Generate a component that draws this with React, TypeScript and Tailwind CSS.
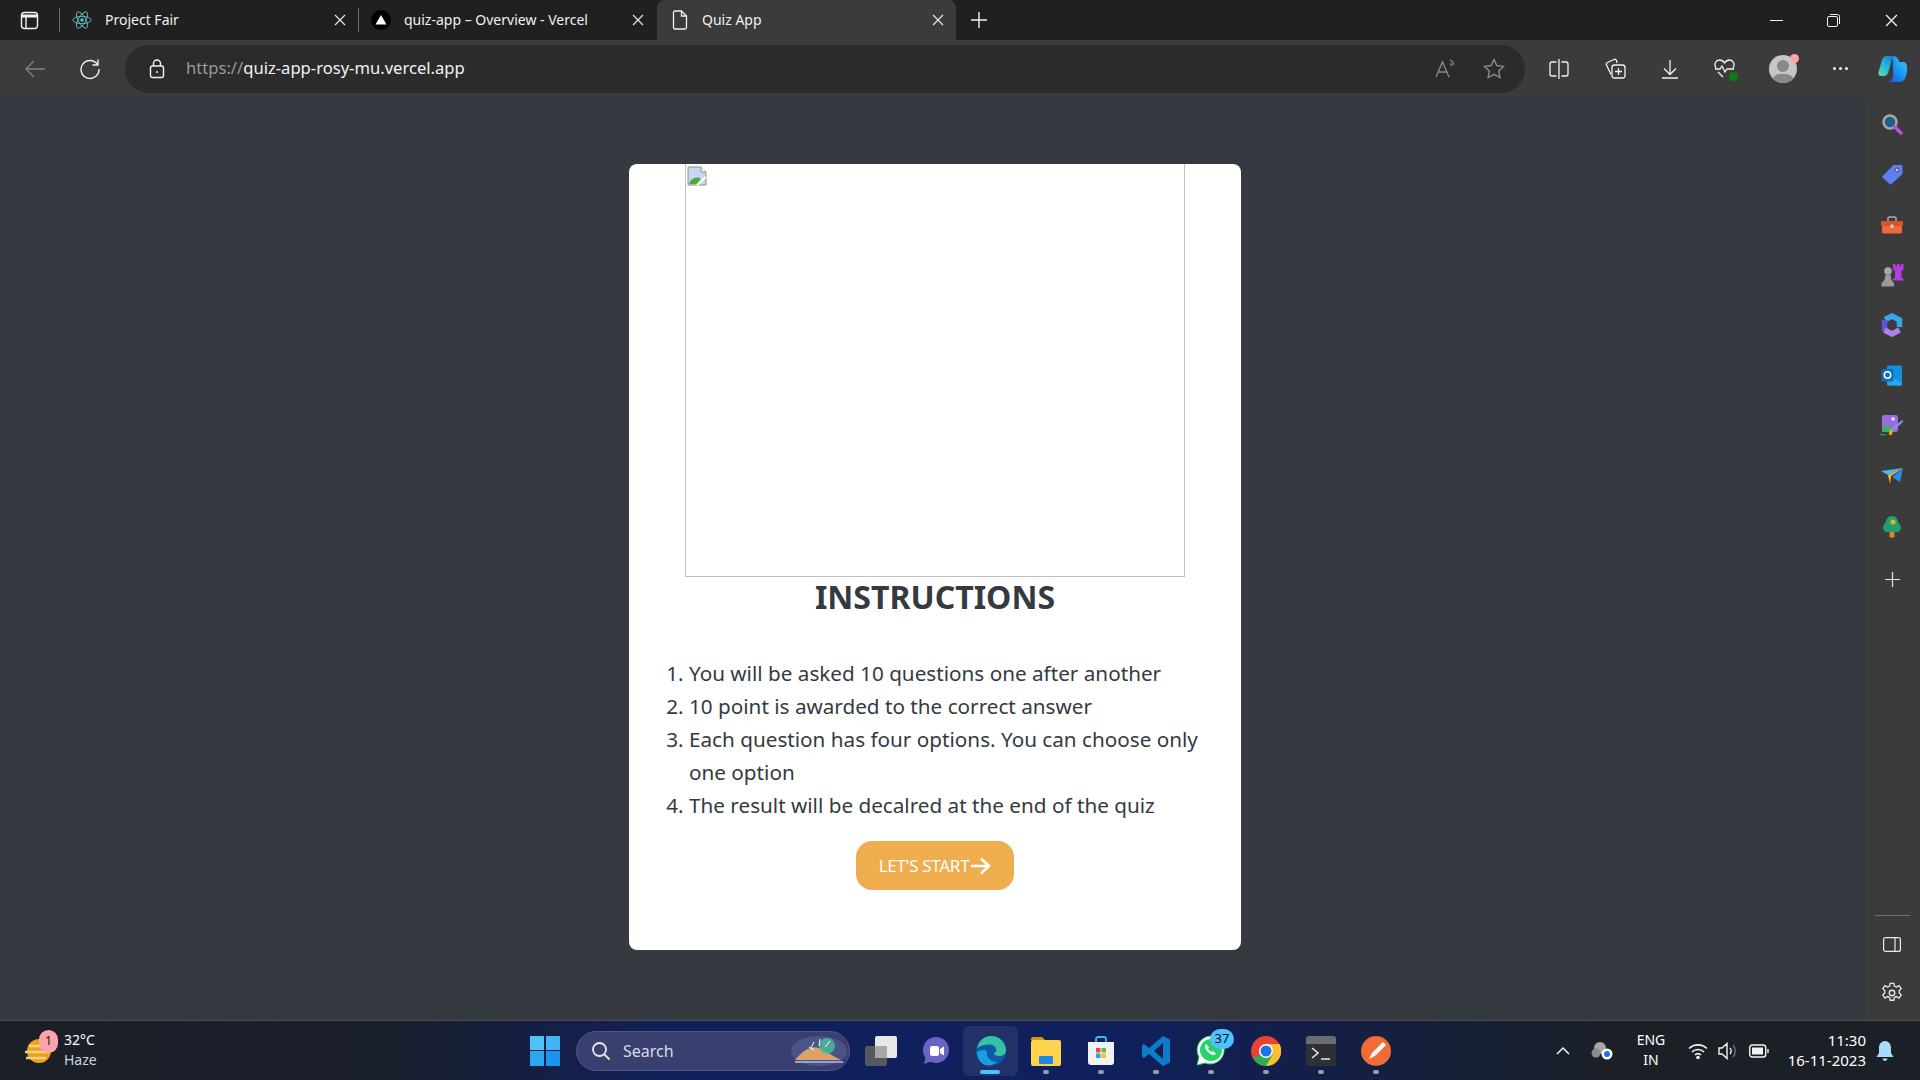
import { ReactNode } from 'react';

const ui = "font-['Noto_Sans','Open_Sans',sans-serif]";

function CloseGlyph({ className = 'text-gray-200', size = 12 }: { className?: string; size?: number }) {
    return (
        <svg width={size} height={size} viewBox="0 0 12 12" className={className} fill="none" stroke="currentColor" strokeWidth="1.2">
            <path d="M1 1l10 10M11 1L1 11" />
        </svg>
    );
}

function ReactLogo() {
    return (
        <svg width="20" height="20" viewBox="-12 -12 24 24" fill="none" stroke="#6fc3d8" strokeWidth="1">
            <circle r="2" fill="#6fc3d8" stroke="none" />
            <ellipse rx="11" ry="4.4" />
            <ellipse rx="11" ry="4.4" transform="rotate(60)" />
            <ellipse rx="11" ry="4.4" transform="rotate(120)" />
        </svg>
    );
}

function Tab({ icon, title, active, width }: { icon: ReactNode; title: string; active?: boolean; width: string }) {
    return (
        <div className={`flex items-center h-full shrink-0 pr-[12px] ${width} ${active ? 'pl-[13px] bg-[#3b3b3b] rounded-t-lg' : 'pl-[12px]'}`}>
            <div className="w-[20px] flex justify-center">{icon}</div>
            <span className={`-mt-[2px] flex-1 text-[14px] text-[#f0f0f0] whitespace-nowrap ${active ? 'ml-[12px]' : 'ml-[13px]'}`}>{title}</span>
            <CloseGlyph />
        </div>
    );
}

function TabStrip() {
    return (
        <div className="h-[40px] bg-[#202020] flex items-end">
            <div className="w-[59px] h-[40px] flex items-center justify-center shrink-0">
                <svg width="19" height="19" viewBox="0 0 19 19" fill="none" stroke="#f2f2f2" strokeWidth="1.4">
                    <rect x="1.5" y="1.5" width="16" height="16" rx="3" />
                    <path d="M1.5 5h16" strokeWidth="3" />
                    <path d="M6 6v11" />
                </svg>
            </div>
            <div className="w-px h-[24px] bg-[#6b6b6b] mb-[8px]" />
            <Tab width="w-[298px]" title="Project Fair" icon={<ReactLogo />} />
            <div className="w-px h-[24px] bg-[#6b6b6b] mb-[8px]" />
            <Tab
                width="w-[297px]"
                title="quiz-app – Overview - Vercel"
                icon={
                    <svg width="20" height="20" viewBox="0 0 20 20">
                        <circle cx="10" cy="10" r="10" fill="#000" />
                        <path d="M10 5l5.5 9.5h-11z" fill="#fff" />
                    </svg>
                }
            />
            <Tab
                active
                width="w-[299px] ml-px"
                title="Quiz App"
                icon={
                    <svg width="16" height="20" viewBox="0 0 16 20" fill="none" stroke="#f2f2f2" strokeWidth="1.3">
                        <path d="M2.5 1h7l5 5v11.5a1.5 1.5 0 0 1-1.500 1.500h-10.500a1.500 1.500 0 0 1-1-1.500v-15a1.500 1.500 0 0 1 1-1.500z" />
                        <path d="M9.500 1v5h5" />
                    </svg>
                }
            />
            <div className="w-[45px] h-[40px] flex items-center justify-center">
                <svg width="18" height="18" viewBox="0 0 18 18" stroke="#f2f2f2" strokeWidth="1.4">
                    <path d="M9 1v16M1 9h16" />
                </svg>
            </div>
            <div className="flex-1" />
            <div className="flex items-center h-[40px] text-gray-100">
                <div className="w-[56px] flex justify-center">
                    <div className="w-[13px] h-px bg-[#f2f2f2]" />
                </div>
                <div className="w-[58px] flex justify-center">
                    <svg width="13" height="13" viewBox="0 0 13 13" fill="none" stroke="#f2f2f2">
                        <rect x="0.500" y="2.500" width="10" height="10" rx="1.500" />
                        <path d="M3 .5h7.500a2 2 0 0 1 2 2V10" />
                    </svg>
                </div>
                <div className="w-[58px] flex justify-center">
                    <CloseGlyph size={13} className="text-[#f2f2f2]" />
                </div>
            </div>
        </div>
    );
}

function ToolbarIcon({ children, className = 'w-[45px]' }: { children: ReactNode; className?: string }) {
    return <div className={`flex justify-center items-center shrink-0 ${className}`}>{children}</div>;
}

function Toolbar() {
    return (
        <div className="h-[57px] bg-[#3b3b3b] flex items-center">
            <div className="w-[125px] flex items-center shrink-0">
                <ToolbarIcon className="w-[69px]">
                    <svg width="22" height="20" viewBox="0 0 22 20" fill="none" stroke="#808080" strokeWidth="1.4">
                        <path d="M21 10H2M10 2l-8 8 8 8" />
                    </svg>
                </ToolbarIcon>
                <ToolbarIcon className="w-[42px]">
                    <svg width="22" height="22" viewBox="0 0 22 22" fill="none" stroke="#f2f2f2" strokeWidth="1.4">
                        <path d="M18.500 6.500A9 9 0 1 0 20 11" />
                        <path d="M19 1.500v5.500h-5.500" />
                    </svg>
                </ToolbarIcon>
            </div>
            <div className="w-[1400px] h-[48px] bg-[#2b2b2b] rounded-full flex items-center shrink-0">
                <div className="w-[62px] flex justify-center ml-[1px]">
                    <svg width="16" height="20" viewBox="0 0 16 20" fill="none" stroke="#f2f2f2" strokeWidth="1.4">
                        <rect x="1.500" y="7" width="13" height="11.500" rx="2" />
                        <path d="M4.500 7V4.500a3.500 3.500 0 0 1 7 0V7" />
                        <circle cx="8" cy="13" r="1" fill="#f2f2f2" stroke="none" />
                    </svg>
                </div>
                <span className="text-[16.600px] text-[#9a9a9a] ml-[-2px]">
                    https://<span className="text-[#f2f2f2]">quiz-app-rosy-mu.vercel.app</span>
                </span>
                <div className="flex-1" />
                <ToolbarIcon className="w-[50px] mr-[-2px]">
                    <svg width="22" height="20" viewBox="0 0 22 20" fill="none" stroke="#8c8c8c" strokeWidth="1.3">
                        <path d="M1 18L7.500 3 14 18M3.500 13h8M15 1c2 1 3.500 3 3.500 5M15 4.500c1 .5 1.500 1.500 1.500 2.500" />
                    </svg>
                </ToolbarIcon>
                <ToolbarIcon className="w-[50px] mr-[6px]">
                    <svg width="22" height="21" viewBox="0 0 22 21" fill="none" stroke="#8c8c8c" strokeWidth="1.4">
                        <path d="M11 1.500l2.900 6 6.600.9-4.800 4.600 1.200 6.500-5.900-3.200-5.900 3.200 1.200-6.500L1.500 8.400l6.600-.9z" />
                    </svg>
                </ToolbarIcon>
            </div>
            <ToolbarIcon className="w-[68px]">
                <svg width="20" height="20" viewBox="0 0 20 20" fill="none" stroke="#f2f2f2" strokeWidth="1.3">
                    <path d="M10 0v20M7.500 3H3a2 2 0 0 0-2 2v10a2 2 0 0 0 2 2h4.500M12.500 3H17a2 2 0 0 1 2 2v10a2 2 0 0 1-2 2h-4.500" />
                </svg>
            </ToolbarIcon>
            <ToolbarIcon className="w-[44px]">
                <svg width="21" height="21" viewBox="0 0 21 21" fill="none" stroke="#f2f2f2" strokeWidth="1.300">
                    <path d="M6 16.500 1.500 7c-.5-1 0-2 1-2.500L9 1.500c1-.5 2 0 2.500 1L12 5" />
                    <rect x="7" y="7" width="13" height="13" rx="2.500" />
                    <path d="M13.500 10v7M10 13.500h7" />
                </svg>
            </ToolbarIcon>
            <ToolbarIcon className="w-[66px]">
                <svg width="16" height="20" viewBox="0 0 16 20" fill="none" stroke="#f2f2f2" strokeWidth="1.300">
                    <path d="M8 1v14M2 9.500l6 6 6-6M0 19h16" />
                </svg>
            </ToolbarIcon>
            <ToolbarIcon className="w-[44px]">
                <div className="relative w-[22px] h-[20px]">
                    <svg width="21" height="19" viewBox="0 0 21 19" fill="none" stroke="#f2f2f2" strokeWidth="1.300">
                        <path d="M2 9C-.5 5 2 1 5.500 1c2 0 3.700 1 5 3 1.300-2 3-3 5-3C19 1 21.500 5 19 9M1 10h5l2-3 3 6 2-3h7M4 13l5 5" />
                    </svg>
                    <div className="absolute right-[-2px] bottom-[-2px] w-[9px] h-[9px] rounded-full bg-[#107c10]" />
                </div>
            </ToolbarIcon>
            <ToolbarIcon className="w-[72px]">
                <div className="relative w-[28px] h-[28px]">
                    <div className="absolute inset-0 rounded-full bg-[#c8c6c4] overflow-hidden">
                        <div className="absolute left-[8px] top-[5px] w-[12px] h-[12px] rounded-full bg-[#8a8886]" />
                        <div className="absolute left-[3px] top-[19px] w-[22px] h-[16px] rounded-full bg-[#8a8886]" />
                    </div>
                    <div className="absolute right-[-2px] top-[-1px] w-[9px] h-[9px] rounded-full bg-[#ffa3a3]" />
                </div>
            </ToolbarIcon>
            <ToolbarIcon className="w-[42px]">
                <div className="flex gap-[3px]">
                    <div className="w-[3px] h-[3px] rounded-full bg-[#f2f2f2]" />
                    <div className="w-[3px] h-[3px] rounded-full bg-[#f2f2f2]" />
                    <div className="w-[3px] h-[3px] rounded-full bg-[#f2f2f2]" />
                </div>
            </ToolbarIcon>
            <ToolbarIcon className="w-[63px]">
                <svg width="30" height="28" viewBox="0 0 30 28">
                    <defs>
                        <linearGradient id="cpA" x1="0" y1="1" x2="0.800" y2="0">
                            <stop offset="0" stopColor="#5ee0a0" />
                            <stop offset="0.500" stopColor="#22b8e0" />
                            <stop offset="1" stopColor="#0f7ec8" />
                        </linearGradient>
                        <linearGradient id="cpB" x1="0" y1="1" x2="1" y2="0">
                            <stop offset="0" stopColor="#1d4fd0" />
                            <stop offset="0.500" stopColor="#1a90ee" />
                            <stop offset="1" stopColor="#38c0f8" />
                        </linearGradient>
                    </defs>
                    <path d="M15 1c3 0 5 1.500 6 5l6 15c-1 3-3 6-6 6H9c3 0 5-2 6-5z" fill="url(#cpB)" />
                    <path d="M9 1h9c-2 0-3 1.500-4 4L10 18c-1 2-2 3-4 3H3c-2 0-3-2-2.500-4L4 5c1-3 2.500-4 5-4z" fill="url(#cpA)" />
                    <path d="M21 7h4c2 0 3.500 1.500 4 4 .5 3 0 7-1 10-.8 3-3 6-7 6H9c3 0 5-2 6-5l3-12c.5-2 1.500-3 3-3z" fill="url(#cpB)" />
                </svg>
            </ToolbarIcon>
        </div>
    );
}

function Sidebar() {
    const icons: ReactNode[] = [
        <svg key="search" width="22" height="22" viewBox="0 0 22 22" fill="none">
            <circle cx="9" cy="9" r="6.500" fill="#1f5f8f" stroke="#a8a8a8" strokeWidth="2.500" />
            <path d="M14 14l6 6" stroke="#c04ed8" strokeWidth="3.500" strokeLinecap="round" />
        </svg>,
        <svg key="tag" width="22" height="22" viewBox="0 0 22 22">
            <path d="M1.500 13 12 2.500c.5-.5 1-.5 1.500-.5H20c1 0 1.500.5 1.500 1.500V10c0 .500-.2 1-.5 1.500L10.500 21c-.5.5-1.500.5-2 0L1.500 14.500c-.5-.5-.5-1 0-1.500z" fill="#5b7ff5" />
            <circle cx="16" cy="7" r="2" fill="#ffc83d" stroke="#4338a8" />
        </svg>,
        <svg key="toolbox" width="24" height="18" viewBox="0 0 24 18">
            <path d="M8 5V2.500C8 1.500 9 1 10 1h4c1 0 2 .5 2 1.500V5" fill="none" stroke="#a8a8a8" strokeWidth="1.500" />
            <rect x="1" y="5" width="22" height="5" fill="#d9522b" />
            <rect x="2" y="10" width="20" height="7.500" rx="1" fill="#ea6a3a" />
            <rect x="10.500" y="8.500" width="3" height="3.500" rx="1" fill="#d0d0d0" />
        </svg>,
        <svg key="chess" width="23" height="24" viewBox="0 0 23 24">
            <path d="M12 1h2.500v2.500H16V1h2.500v2.500H20V1h2.500v5.500L20.500 8v6.500l2 1.500v1.500H12V16l2-1.500V8l-2-1.500z" fill="#b63be0" />
            <circle cx="7" cy="8" r="3.800" fill="#a8a8a8" />
            <path d="M4.500 11.500h5l1 5.500 2.500 3v3.500H0.500V20l3-3z" fill="#9a9a9a" />
        </svg>,
        <svg key="m365" width="22" height="24" viewBox="0 0 22 24" fill="none" strokeWidth="5.500">
            <path d="M4 6.500 11 3l7.500 4v7" stroke="#38a7e8" />
            <path d="M3.500 18V7" stroke="#5a55d6" />
            <path d="M3.500 17 11 21l7.500-4" stroke="#b280e8" />
        </svg>,
        <svg key="outlook" width="22" height="21" viewBox="0 0 22 21">
            <rect x="6" y="0.500" width="15" height="20" rx="1.500" fill="#1490df" />
            <path d="M6 9l15 9v1a1.500 1.500 0 0 1-1.500 1.500H7.500A1.500 1.500 0 0 1 6 19z" fill="#28a8ea" />
            <rect x="0.500" y="4" width="12" height="12.500" rx="1.500" fill="#0f6cbd" />
            <circle cx="6.500" cy="10" r="3.200" fill="none" stroke="#fff" strokeWidth="1.500" />
        </svg>,
        <svg key="designer" width="24" height="24" viewBox="0 0 24 24">
            <rect x="2" y="1" width="16" height="17" rx="2.500" fill="#9c6be0" />
            <circle cx="13" cy="5" r="1.700" fill="#f5e8ff" />
            <path d="M2 15l5-5 8 8H4a2 2 0 0 1-2-2z" fill="#3fae6a" />
            <path d="M22 6l1.500 1.500L13 17l-2-2z" fill="#8a8cf0" />
            <path d="M10.500 15l2.500 2.500-1.500 3.500h-2.500v-3z" fill="#eab308" />
            <path d="M0 21c2-2 4 1 6-.5" stroke="#2ea043" strokeWidth="1.200" fill="none" />
        </svg>,
        <svg key="send" width="22" height="17" viewBox="0 0 22 17">
            <path d="M0 3 22 0 7 7z" fill="#49b5f5" />
            <path d="M7 7 22 0 10 8l-1 8z" fill="#f7b731" />
            <path d="M22 0 19 14l-8-5z" fill="#2a8ae8" />
        </svg>,
        <svg key="tree" width="18" height="22" viewBox="0 0 18 22">
            <path d="M9 0c4 0 6 3.500 6.500 7 1.500 1 2.500 3 2.500 5 0 2-2 4-4 4H4c-2 0-4-2-4-4 0-2 1-4 2.500-5C3 3.500 5 0 9 0z" fill="#22a06b" />
            <rect x="6.500" y="16" width="5" height="5.500" rx="1" fill="#e08a1e" />
            <circle cx="10" cy="6" r="2.500" fill="#f0a832" />
        </svg>,
    ];
    return (
        <div className="w-[54px] shrink-0 bg-[#3b3b3b] flex flex-col items-center pt-[2px] pr-[2px]">
            <div className="flex flex-col items-center">
                {icons.map((icon, i) => (
                    <div key={i} className="h-[50.300px] flex items-center justify-center">
                        {icon}
                    </div>
                ))}
                <div className="h-[55px] flex items-center justify-center">
                    <svg width="15" height="15" viewBox="0 0 15 15" stroke="#e6e6e6" strokeWidth="1.200">
                        <path d="M7.500 0v15M0 7.500h15" />
                    </svg>
                </div>
            </div>
            <div className="flex-1" />
            <div className="w-[35px] h-px bg-[#6e6e6e] mb-[21px]" />
            <svg width="18" height="15" viewBox="0 0 18 15" fill="none" stroke="#eaeaea" strokeWidth="1.200" className="mb-[30px]">
                <rect x="0.600" y="0.600" width="16.800" height="13.800" rx="2" />
                <path d="M12 .6v13.800" />
            </svg>
            <svg width="22" height="22" viewBox="0 0 24 24" fill="none" stroke="#eaeaea" strokeWidth="1.400" className="mb-[16px]">
                <circle cx="12" cy="12" r="3" />
                <path d="M10 1.500h4l.6 3 2.300 1 2.700-1.600 2.500 3.300-2.200 2.200v2.600l2.200 2.200-2.500 3.300-2.700-1.600-2.300 1-.6 3h-4l-.6-3-2.300-1-2.700 1.600-2.500-3.300 2.200-2.200v-2.600L1.900 7.200l2.500-3.300 2.700 1.600 2.300-1z" />
            </svg>
        </div>
    );
}

function BrokenImageIcon() {
    return (
        <svg width="20" height="20" viewBox="0 0 20 20" className="absolute left-[1px] top-[2px]">
            <path d="M1 1h13l5 5v13H1z" fill="#c5d9f2" stroke="#8e8e8e" />
            <path d="M14 1v5h5" fill="#fff" stroke="#8e8e8e" />
            <path d="M2 18c2-6 8-8 12-5l-4 5z" fill="#4fa83d" />
            <path d="M10 19l9-8" stroke="#fff" strokeWidth="2" />
        </svg>
    );
}

function QuizCard() {
    const items = [
        'You will be asked 10 questions one after another',
        '10 point is awarded to the correct answer',
        'Each question has four options. You can choose only one option',
        'The result will be decalred at the end of the quiz',
    ];
    return (
        <div className="w-[612px] h-[786px] bg-white rounded-[8px] mt-[67px] flex flex-col items-center">
            <div className="relative w-[500px] h-[413px] shrink-0 border border-[#c0c0c0] border-t-0">
                <BrokenImageIcon />
            </div>
            <h1 className="text-[32px] leading-[40px] font-bold text-[#343a40]">INSTRUCTIONS</h1>
            <ol className="list-decimal self-start w-full pl-[60px] pr-[36px] mt-[40px] text-[20.700px] leading-[33px] text-[#343a40]">
                {items.map((item) => (
                    <li key={item}>{item}</li>
                ))}
            </ol>
            <button className="mt-[19px] w-[158px] h-[49px] rounded-[16px] bg-[#f0ad4e] text-white text-[17px] flex items-center justify-center gap-[2px]">
                <span className="tracking-[-0.300px]">LET'S START</span>
                <svg width="20" height="18" viewBox="0 0 20 18" fill="none" stroke="#fff" strokeWidth="2.600">
                    <path d="M0 9h18M10 1.500 18 9l-8 7.500" />
                </svg>
            </button>
        </div>
    );
}

function TaskIcon({ children, dot, wide }: { children: ReactNode; dot?: boolean; wide?: boolean }) {
    return (
        <div className={`relative w-[55px] h-[50px] flex items-center justify-center shrink-0 ${wide ? 'bg-[#ffffff14] rounded-md' : ''}`}>
            {children}
            {dot && <div className="absolute bottom-[2px] left-[25px] w-[6px] h-[4px] rounded-full bg-[#9a9ea8]" />}
            {wide && <div className="absolute bottom-[2px] left-[17px] w-[20px] h-[4px] rounded-full bg-[#4cc2ff]" />}
        </div>
    );
}

function Taskbar() {
    return (
        <div className="h-[60px] border-t border-[#4a4d52] bg-[linear-gradient(90deg,#1b2027_0%,#1a1f2c_20%,#10205c_36%,#10205c_58%,#141f44_70%,#1b2027_84%)] flex items-center text-white relative">
            <div className="w-[530px] shrink-0 flex items-center pl-[24px]">
                <div className="relative w-[30px] h-[40px] flex items-center">
                    <svg width="30" height="34" viewBox="0 0 30 34">
                        <circle cx="15" cy="17" r="12" fill="#f59e0b" />
                        <path d="M5 12h21M1 18h24M2 24h20" stroke="#e8d29a" strokeWidth="2.500" />
                    </svg>
                    <div className="absolute left-[15px] top-[-1px] w-[19px] h-[23px] rounded-full bg-[#ffa3ab] text-[#222] text-[13px] flex items-center justify-center">1</div>
                </div>
                <div className="ml-[10px] -mt-[2px] text-[14px] leading-[20px]">
                    <div>32°C</div>
                    <div className="text-[#d0d3da]">Haze</div>
                </div>
            </div>
            <div className="w-[30px] h-[30px] grid grid-cols-2 gap-[1.500px] shrink-0">
                <div className="bg-[#4fc3f7]" />
                <div className="bg-[#40b4f5]" />
                <div className="bg-[#2aa8f2]" />
                <div className="bg-[#1a95ef]" />
            </div>
            <div className="relative ml-[16px] w-[274px] h-[40px] rounded-full bg-[#39406f] border border-[#50568a] flex items-center shrink-0">
                <svg width="20" height="20" viewBox="0 0 20 20" fill="none" stroke="#e8e8e8" strokeWidth="1.800" className="ml-[14px]">
                    <circle cx="8.500" cy="8.500" r="6.500" />
                    <path d="M13.500 13.500 18.500 18.500" />
                </svg>
                <span className="ml-[12px] text-[16px] text-[#d9dbe6]">Search</span>
                <svg width="60" height="34" viewBox="0 0 60 34" className="absolute right-[0px] top-[2px]">
                    <ellipse cx="30" cy="17" rx="28" ry="15" fill="#4a5488" />
                    <path d="M6 26c10-12 18-14 24-12 6 3 10 6 22 12z" fill="#d9a36a" />
                    <circle cx="38" cy="12" r="8" fill="#4bbf9a" opacity="0.800" />
                    <path d="M22 14l3-6M30 12l1-7M36 13l5-6M25 16l-5-3" stroke="#fff" strokeWidth="1" />
                    <path d="M6 28h48" stroke="#9aa0c8" strokeWidth="2" />
                </svg>
            </div>
            <div className="flex items-center ml-[3px] shrink-0">
                <TaskIcon>
                    <div className="relative w-[32px] h-[30px]">
                        <div className="absolute left-0 top-[10px] w-[22px] h-[20px] bg-[#55585e] rounded-[2px]" />
                        <div className="absolute left-[10px] top-0 w-[22px] h-[22px] bg-[#e8e8e8] rounded-[2px]" />
                        <div className="absolute left-[10px] top-[10px] w-[12px] h-[12px] bg-[#a8a8a8]" />
                    </div>
                </TaskIcon>
                <TaskIcon>
                    <svg width="30" height="30" viewBox="0 0 30 30">
                        <circle cx="15" cy="14" r="13" fill="#6d63c7" />
                        <path d="M5 20l-2 8 8-3z" fill="#6d63c7" />
                        <rect x="9" y="10" width="9" height="10" rx="2" fill="#fff" />
                        <path d="M19 13l4-2.500v9L19 17z" fill="#fff" />
                    </svg>
                </TaskIcon>
                <TaskIcon wide>
                    <svg width="32" height="32" viewBox="0 0 32 32">
                        <circle cx="16" cy="16" r="15" fill="#0c59a4" />
                        <path d="M2 13C4 5 10 1 16 1c8 0 15 6 15 14 0 4-3 6-7 6-3 0-5-1-5-3 3-1 3-5 0-7-4-3-12-1-17 2z" fill="#35c1a4" />
                        <path d="M12 16c-1 6 3 11 10 11-3 3-8 4-12 3C5 28 2 23 2 17c2-2 6-3 10-1z" fill="#1b9de2" />
                    </svg>
                </TaskIcon>
                <TaskIcon dot>
                    <svg width="32" height="30" viewBox="0 0 32 30">
                        <path d="M1 3c0-1 1-2 2-2h9l3 3h-14z" fill="#d99a0a" />
                        <rect x="1" y="4" width="30" height="26" rx="2" fill="#ffd34d" />
                        <rect x="9" y="20" width="14" height="8" rx="1" fill="#1e88e5" />
                    </svg>
                </TaskIcon>
                <TaskIcon dot>
                    <svg width="28" height="30" viewBox="0 0 28 30">
                        <path d="M9 6V3c0-1 1-2 2-2h6c1 0 2 1 2 2v3" fill="none" stroke="#38bdf8" strokeWidth="1.800" />
                        <path d="M1 6h26v20c0 2-1 3-3 3H4c-2 0-3-1-3-3z" fill="#f2f2f2" />
                        <rect x="9" y="12" width="4.500" height="4.500" fill="#e74c3c" />
                        <rect x="14.500" y="12" width="4.500" height="4.500" fill="#7cb342" />
                        <rect x="9" y="17.500" width="4.500" height="4.500" fill="#29a8e0" />
                        <rect x="14.500" y="17.500" width="4.500" height="4.500" fill="#fbc02d" />
                    </svg>
                </TaskIcon>
                <TaskIcon dot>
                    <svg width="30" height="32" viewBox="0 0 30 32">
                        <path d="M22 1l7 3.500v23L22 31 8 19l-5 4-2-1.500v-11L3 9l5 4z" fill="#0b7dc9" />
                        <path d="M22 8 13 16l9 8z" fill="#0f1f4f" />
                    </svg>
                </TaskIcon>
                <TaskIcon dot>
                    <svg width="30" height="31" viewBox="0 0 30 31">
                        <path d="M15 1a14 14 0 0 0-12 21L1 30l8-2a14 14 0 1 0 6-27z" fill="#fff" stroke="#25d366" strokeWidth="1" />
                        <circle cx="15" cy="15" r="11" fill="#25d366" />
                        <path d="M10 9c-2 2-1 5 2 8s6 4 8 2l-3-3-2 1-3-3 1-2z" fill="#fff" />
                    </svg>
                    <div className="absolute left-[27px] top-[3px] w-[24px] h-[20px] rounded-full bg-[#4cc2ff] text-[#111] text-[13px] flex items-center justify-center">37</div>
                </TaskIcon>
                <TaskIcon dot>
                    <svg width="30" height="30" viewBox="0 0 30 30">
                        <circle cx="15" cy="15" r="15" fill="#ea4335" />
                        <path d="M15 15 28 22a15 15 0 0 1-13 8 15 15 0 0 1-13-8z" fill="#34a853" />
                        <path d="M15 8h13.500A15 15 0 0 1 15 30l7-12z" fill="#fbc02d" />
                        <circle cx="15" cy="15" r="7" fill="#fff" />
                        <circle cx="15" cy="15" r="5.500" fill="#1a73e8" />
                    </svg>
                </TaskIcon>
                <TaskIcon dot>
                    <div className="w-[30px] h-[30px] rounded-[3px] bg-[#2f3033] overflow-hidden">
                        <div className="h-[8px] bg-[#6a6c70]" />
                        <svg width="30" height="22" viewBox="0 0 30 22" fill="none" stroke="#e8e8e8" strokeWidth="1.600">
                            <path d="M6 4l6 5-6 5M15 15h9" />
                        </svg>
                    </div>
                </TaskIcon>
                <TaskIcon dot>
                    <svg width="30" height="30" viewBox="0 0 30 30">
                        <circle cx="15" cy="15" r="15" fill="#ef6c35" />
                        <path d="M22 6 11 17l-3 6 6-3L25 9z" fill="#fff" />
                    </svg>
                </TaskIcon>
            </div>
            <div className="flex-1" />
            <div className="flex items-center shrink-0">
                <svg width="14" height="8" viewBox="0 0 14 8" fill="none" stroke="#f2f2f2" strokeWidth="1.500" className="mr-[21px]">
                    <path d="M1 7l6-6 6 6" />
                </svg>
                <svg width="22" height="18" viewBox="0 0 22 18" className="mr-[18px]">
                    <circle cx="9" cy="6" r="6" fill="#a8a8a8" />
                    <circle cx="5" cy="11" r="4.500" fill="#8c8c8c" />
                    <circle cx="16" cy="12" r="5.500" fill="#fff" />
                    <circle cx="16" cy="12" r="3" fill="#1a73e8" />
                </svg>
                <div className="w-[40px] -mt-[2px] text-center text-[14px] leading-[20px] mr-[17px]">
                    <div>ENG</div>
                    <div>IN</div>
                </div>
                <svg width="20" height="16" viewBox="0 0 20 16" fill="none" stroke="#f2f2f2" strokeWidth="1.600" className="mr-[10px]">
                    <path d="M1 5.500a13 13 0 0 1 18 0M4 9a8.500 8.500 0 0 1 12 0M7 12a4 4 0 0 1 6 0" />
                    <circle cx="10" cy="14.500" r="1" fill="#f2f2f2" />
                </svg>
                <svg width="20" height="18" viewBox="0 0 20 18" fill="none" stroke="#f2f2f2" strokeWidth="1.400" className="mr-[11px]">
                    <path d="M1 6h3l5-4.500v15L4 12H1zM12 6c1.500 1.500 1.500 4.500 0 6" />
                    <path d="M15 3c3 3 3 9 0 12" stroke="#777" />
                </svg>
                <svg width="20" height="14" viewBox="0 0 20 14" fill="none" stroke="#f2f2f2" strokeWidth="1.400" className="mr-[17px]">
                    <rect x="0.700" y="1" width="16" height="12" rx="2.500" />
                    <rect x="3" y="3.500" width="11" height="7" fill="#f2f2f2" stroke="none" />
                    <path d="M19 5v4" />
                </svg>
                <div className="w-[80px] -mt-[2px] text-right text-[15px] leading-[20px]">
                    <div>11:30</div>
                    <div>16-11-2023</div>
                </div>
                <svg width="18" height="20" viewBox="0 0 18 20" className="ml-[10px] mr-[26px]">
                    <path d="M9 0c3.500 0 6 3 6 6.500V12l2.500 4h-17L3 12V6.500C3 3 5.500 0 9 0z" fill="#a5dcf7" />
                    <path d="M6.500 17.500h5a2.500 2.500 0 0 1-5 0z" fill="#a5dcf7" />
                </svg>
            </div>
        </div>
    );
}

export default function App() {
    return (
        <div className={`w-[1920px] h-[1080px] flex flex-col overflow-hidden ${ui}`}>
            <TabStrip />
            <Toolbar />
            <div className="flex h-[923px] bg-[#3b3b3b]">
                <div className="flex-1 bg-[#343a40] rounded-br-lg rounded-tr-lg flex justify-center items-start pl-[4px]">
                    <QuizCard />
                </div>
                <Sidebar />
            </div>
            <Taskbar />
        </div>
    );
}
